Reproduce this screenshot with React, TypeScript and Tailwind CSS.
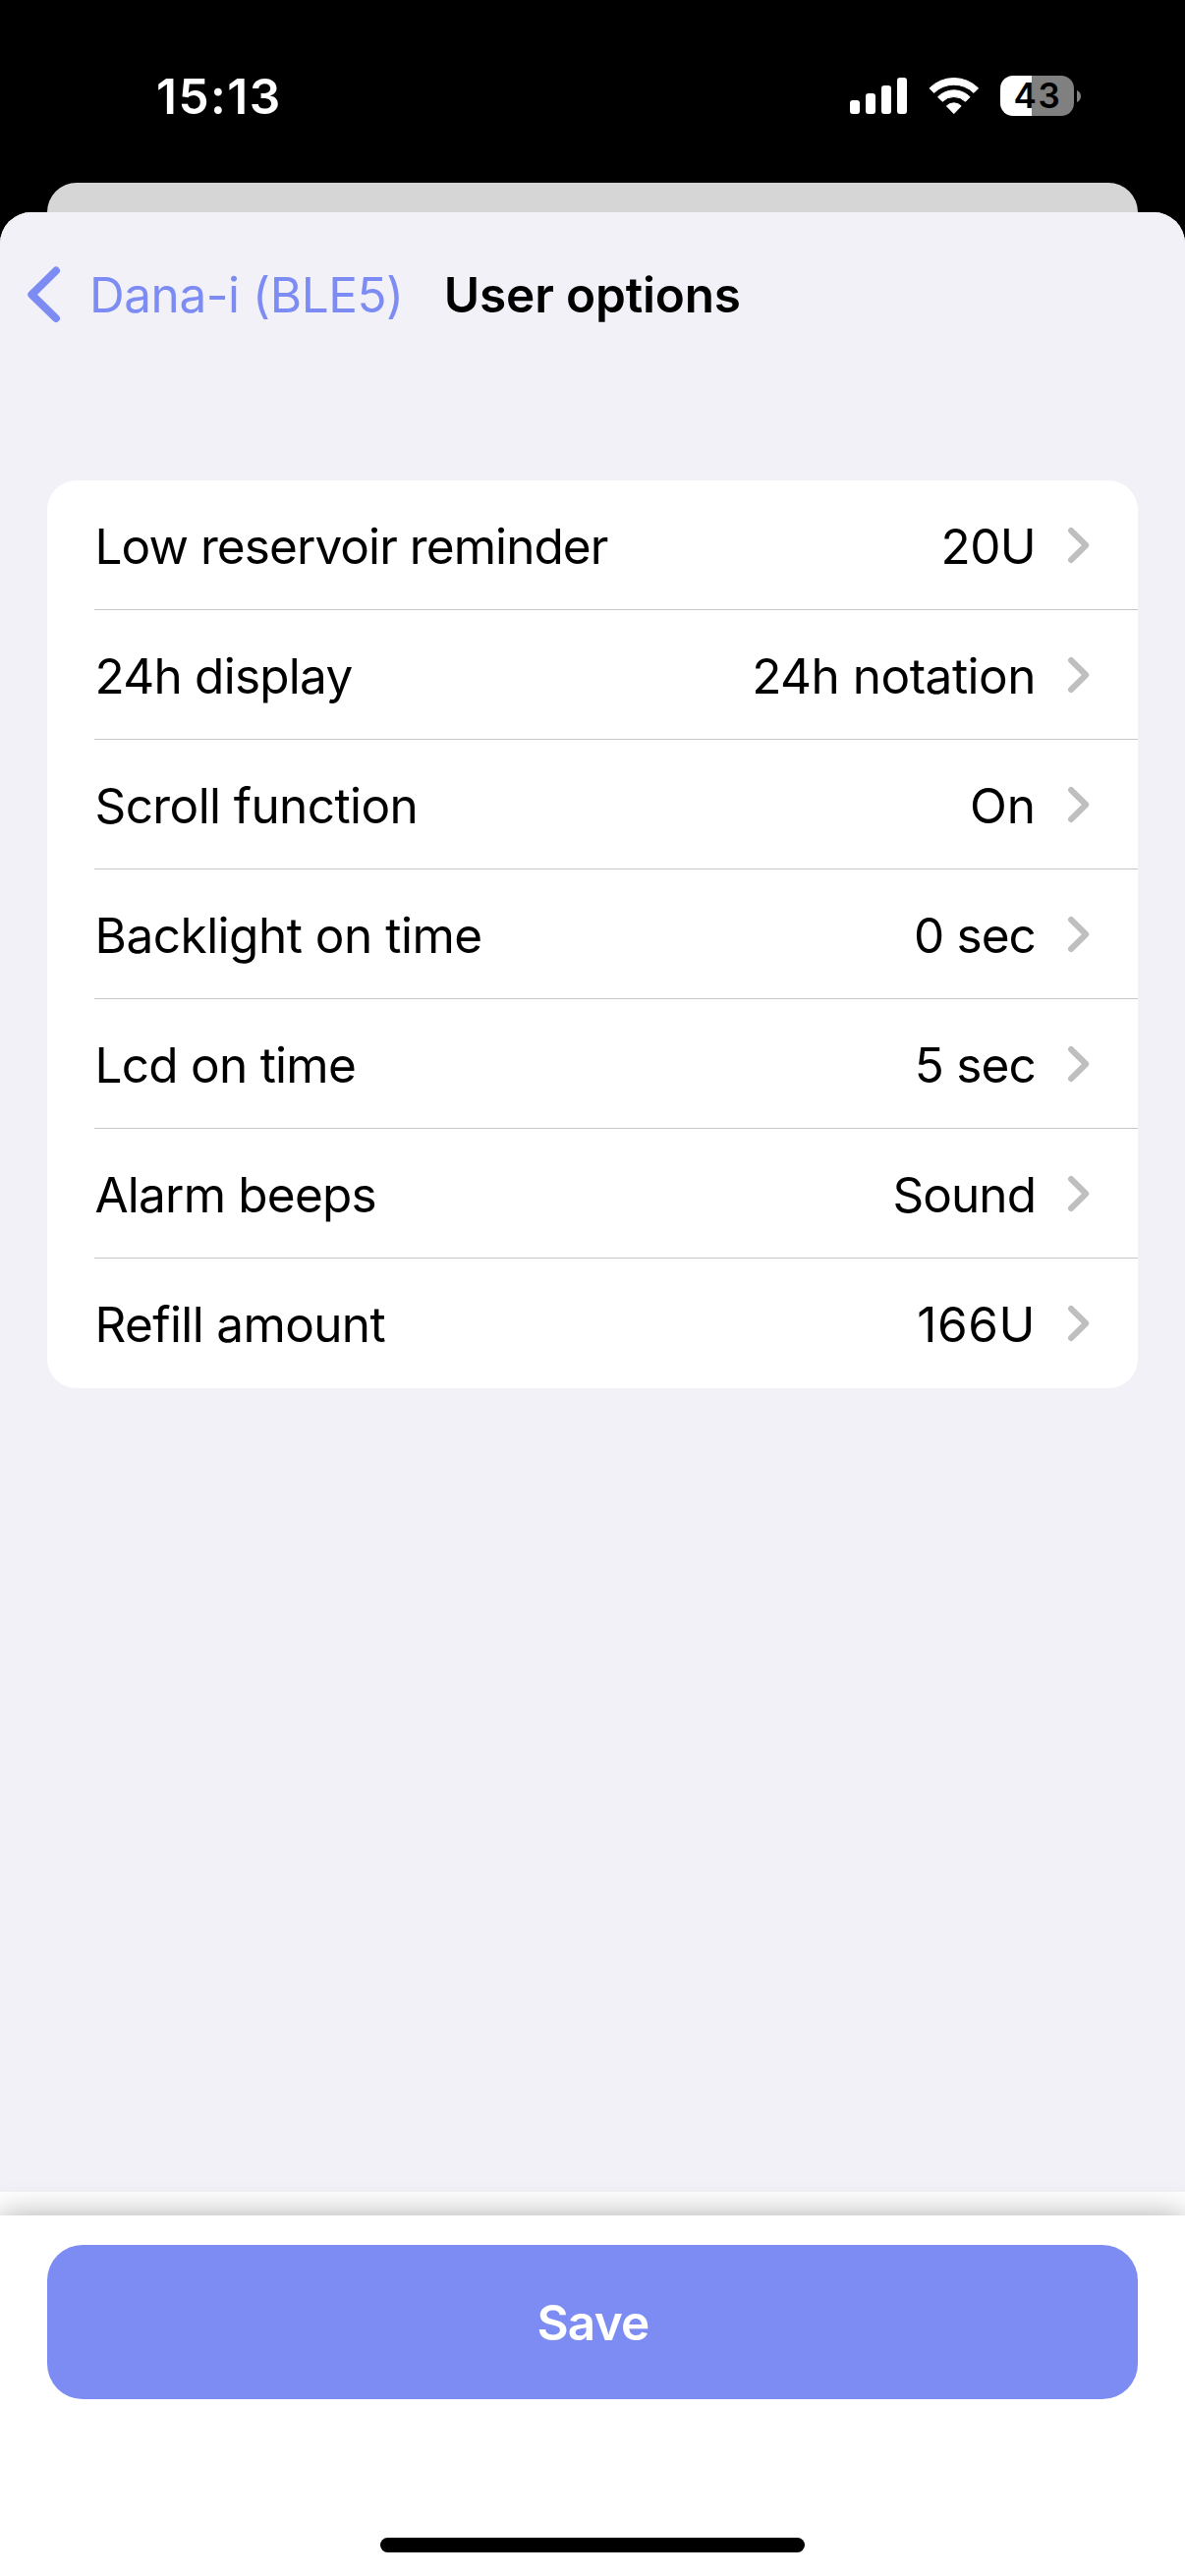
type Option = { label: string; labelTracking: string; value: string; valueTracking: string };

const options: Option[] = [
  { label: "Low reservoir reminder", labelTracking: "tracking-[-0.93px]", value: "20U", valueTracking: "tracking-[-0.6px]" },
  { label: "24h display", labelTracking: "tracking-[-0.75px]", value: "24h notation", valueTracking: "tracking-[-0.5px]" },
  { label: "Scroll function", labelTracking: "tracking-[-0.6px]", value: "On", valueTracking: "tracking-normal" },
  { label: "Backlight on time", labelTracking: "tracking-[-0.5px]", value: "0 sec", valueTracking: "tracking-[-0.9px]" },
  { label: "Lcd on time", labelTracking: "tracking-[-0.74px]", value: "5 sec", valueTracking: "tracking-[-0.8px]" },
  { label: "Alarm beeps", labelTracking: "tracking-[-0.8px]", value: "Sound", valueTracking: "tracking-[-0.95px]" },
  { label: "Refill amount", labelTracking: "tracking-[-0.63px]", value: "166U", valueTracking: "tracking-[0.6px]" },
];

function SignalIcon() {
  return (
    <svg width="58" height="37" viewBox="0 0 58 37" fill="white" className="mt-[79px]">
      <rect x="0" y="23" width="10" height="14" rx="3" />
      <rect x="16" y="16" width="10" height="21" rx="3" />
      <rect x="32" y="8" width="10" height="29" rx="3" />
      <rect x="48" y="0" width="10" height="37" rx="3" />
    </svg>
  );
}

function WifiIcon() {
  return (
    <svg width="52" height="38" viewBox="0 0 52 38" fill="white" stroke="white" strokeWidth="1" strokeLinejoin="round" className="mt-[79px] ml-[22px]">
      <path d="M1 10.8A35 35 0 0 1 50.6 10.8L46 15.4A29 29 0 0 0 5.6 15.4Z" />
      <path d="M9.5 19.7A22.8 22.8 0 0 1 42.1 19.7L37.5 24.3A16.6 16.6 0 0 0 14.1 24.3Z" />
      <path d="M18.4 28.9A10.5 10.5 0 0 1 33.2 28.9L25.8 36.6Z" />
    </svg>
  );
}

function Battery() {
  return (
    <div className="mt-[77px] ml-[21px] flex items-center gap-[3px]">
      <div className="flex h-[41px] w-[75px] items-center justify-center rounded-[13px] bg-[linear-gradient(to_right,#fff_32px,#808080_32px)] pl-[1px] text-[35px] leading-[41px] font-semibold tracking-[1.6px] text-black">
        43
      </div>
      <svg width="4" height="12" viewBox="0 0 4 12" fill="#808080">
        <path d="M0 0C2.6 1 4 3.4 4 6S2.6 11 0 12Z" />
      </svg>
    </div>
  );
}

function StatusBar() {
  return (
    <header className="flex h-[186px] items-start justify-between pr-[106px] pl-[159px]">
      <span className="mt-[68px] text-[49.5px] leading-[60px] font-semibold tracking-[1.5px] text-white">15:13</span>
      <div className="flex items-start">
        <SignalIcon />
        <WifiIcon />
        <Battery />
      </div>
    </header>
  );
}

function OptionRow({ option }: { option: Option }) {
  return (
    <li className="group ml-12 h-[132px]">
      <div className="flex h-full items-center border-b border-[#c6c6c8] pr-12 group-last:border-transparent">
        <span className={`flex-1 pt-[3px] pl-[0.5px] ${option.labelTracking}`}>{option.label}</span>
        <span className={`pt-[3px] pr-8 ${option.valueTracking}`}>{option.value}</span>
        <svg width="24" height="40" viewBox="0 0 24 40" fill="none" stroke="#bfbfbf" strokeWidth="6" strokeLinecap="round" strokeLinejoin="round">
          <path d="M4 5L19.2 20L4 35" />
        </svg>
      </div>
    </li>
  );
}

export default function App() {
  return (
    <div className="flex h-[2622px] w-[1206px] flex-col overflow-hidden bg-black font-[Inter,sans-serif] text-[49.5px] leading-[60px] whitespace-nowrap text-black">
      <StatusBar />
      <div className="mx-12 -mb-8 h-[62px] shrink-0 rounded-t-[30px] bg-[#d6d6d6]" />
      <main className="relative flex min-h-0 flex-1 flex-col overflow-hidden rounded-t-[32px] bg-white">
        <div className="flex h-[2015px] flex-col bg-[#f2f1f7]">
          <nav className="flex h-[168px] items-center pl-[25px]">
            <svg width="38" height="60" viewBox="0 0 38 60" fill="none" stroke="#7d8cf3" strokeWidth="8" strokeLinecap="round" strokeLinejoin="round">
              <path d="M32 5.5L7.3 29.8L32 54" />
            </svg>
            <span className="ml-[28px] tracking-[-0.45px] text-[#7d8cf3]">Dana-i (BLE5)</span>
            <h1 className="ml-[41px] font-semibold tracking-[-0.16px]">User options</h1>
          </nav>
          <ul className="mx-12 mt-[105px] overflow-hidden rounded-[30px] bg-white">
            {options.map((option) => (
              <OptionRow key={option.label} option={option} />
            ))}
          </ul>
        </div>
        <footer className="mt-6 flex flex-1 flex-col items-center bg-white px-12 pt-[30px] shadow-[0_0_30px_rgba(0,0,0,0.33)]">
          <button className="h-[157px] w-full rounded-[36px] bg-[#7d8cf3] pl-[1px] font-semibold tracking-[-0.75px] text-white">Save</button>
          <div className="mt-[141px] h-[15px] w-[432px] rounded-full bg-black" />
        </footer>
      </main>
    </div>
  );
}
